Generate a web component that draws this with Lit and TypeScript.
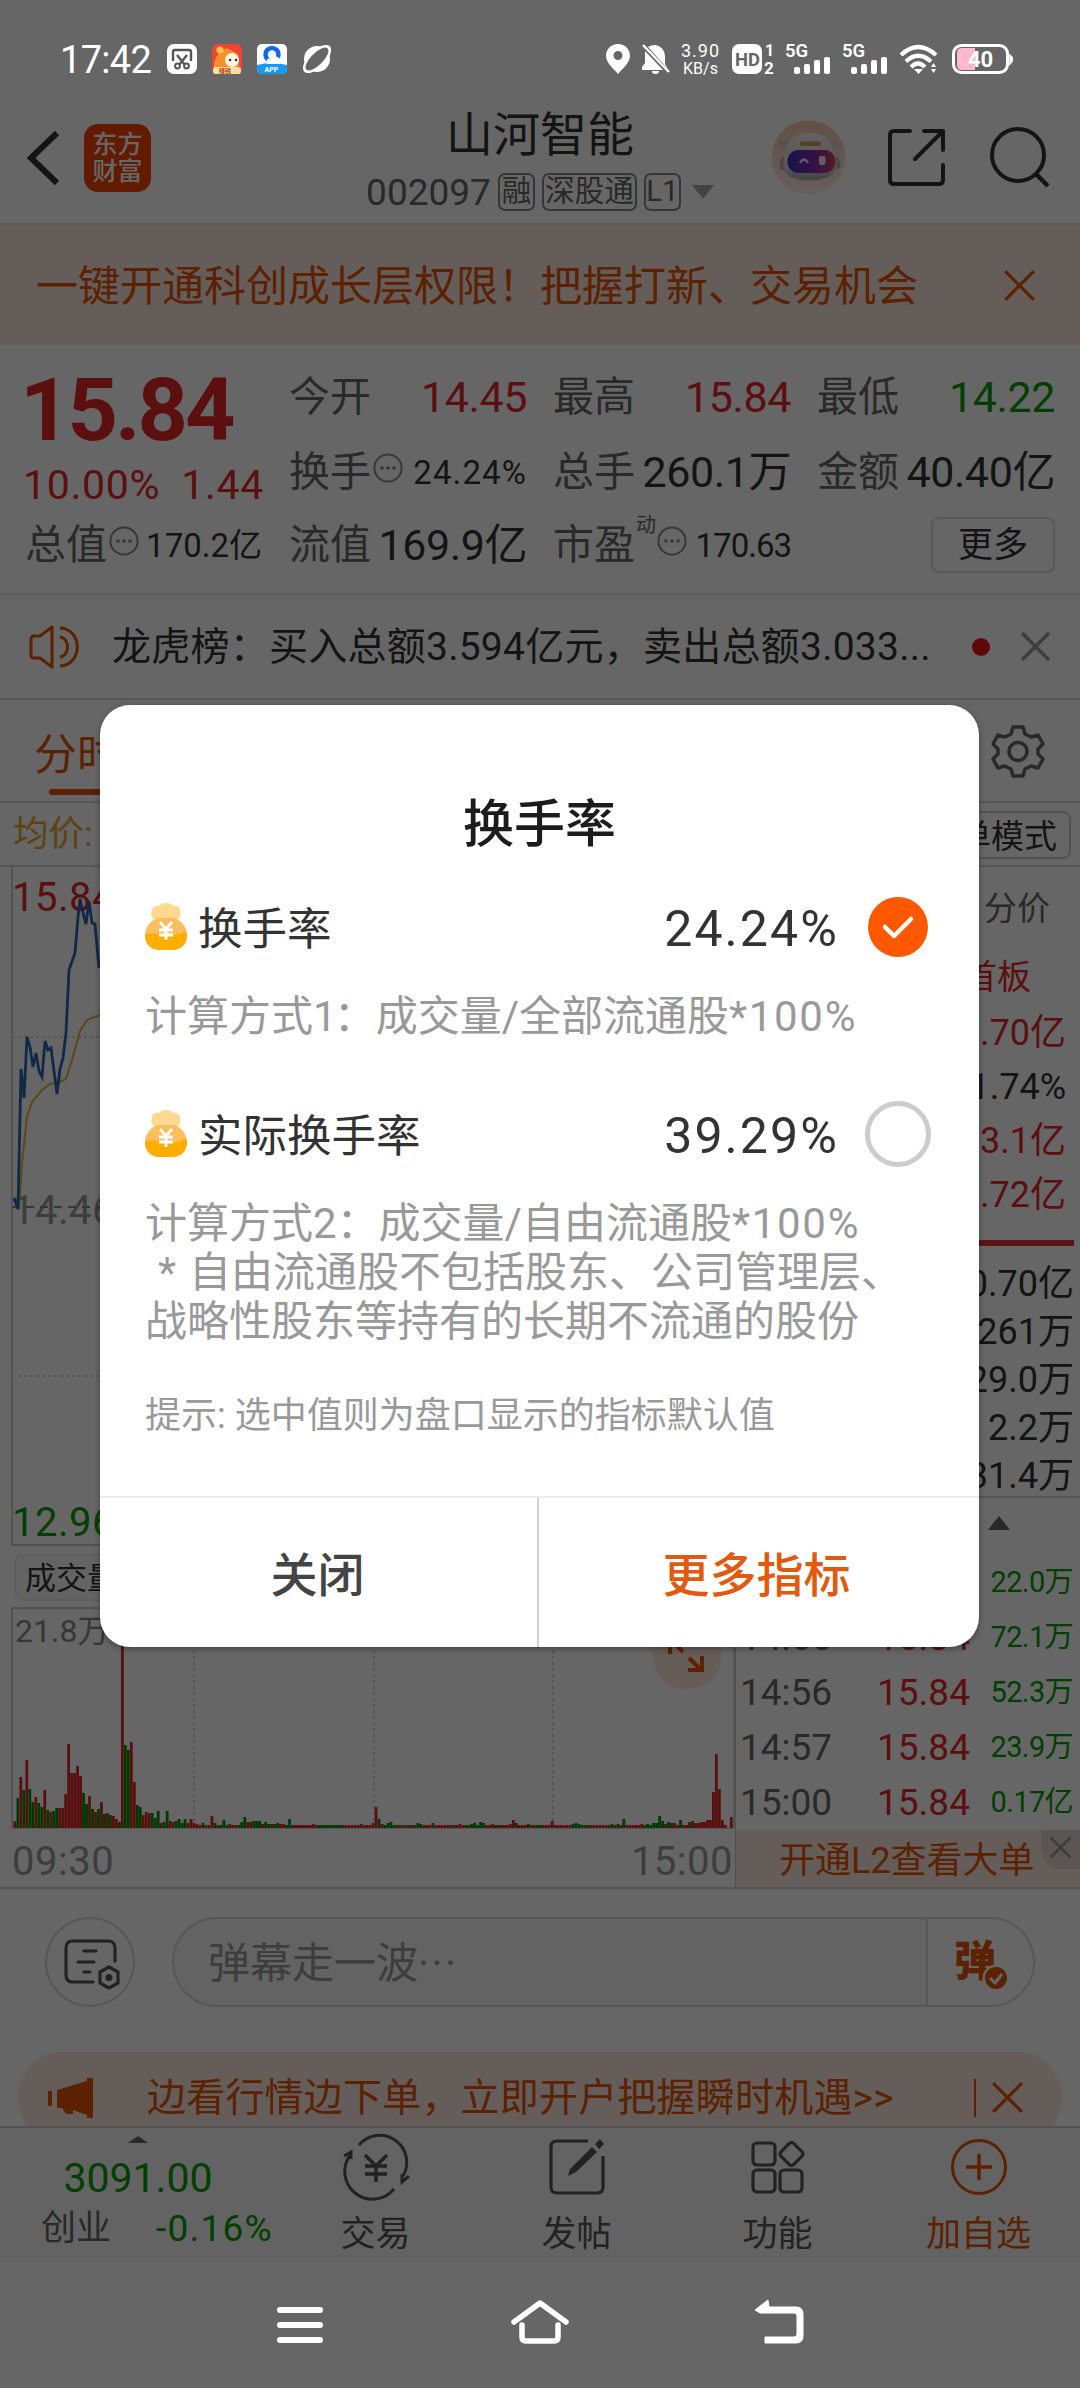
import { LitElement, html, svg, css } from "lit";
import { customElement, state } from "lit/decorators.js";

/* Volume bars: [height, "r" | "g"]; slots without an entry draw a 3px stub. */
const VOLUME_HEAD: [number, string][] = [
  [7, "r"], [30, "g"], [51, "r"], [38, "g"], [68, "r"], [39, "g"], [26, "g"], [31, "r"], [25, "g"], [21, "g"],
  [38, "r"], [18, "g"], [16, "r"], [17, "g"], [20, "g"], [20, "r"], [20, "r"], [34, "r"], [84, "r"], [55, "r"],
  [55, "r"], [62, "r"], [52, "r"], [35, "g"], [24, "g"], [32, "r"], [19, "g"], [16, "r"], [19, "g"], [26, "r"],
  [14, "g"], [15, "r"], [13, "g"], [12, "r"], [9, "r"], [6, "g"], [200, "r"], [83, "g"], [78, "g"], [86, "r"],
  [46, "r"], [23, "g"], [21, "g"], [13, "r"], [16, "r"], [15, "r"], [15, "g"], [10, "g"], [17, "g"], [5, "r"],
  [6, "g"], [17, "g"], [7, "r"], [6, "r"], [7, "g"], [9, "g"], [5, "g"], [9, "g"], [5, "r"], [9, "r"],
  [5, "r"], [4, "r"], [3, "r"], [5, "g"], [3, "r"], [3, "r"], [12, "r"], [5, "g"], [3, "r"], [3, "g"],
  [8, "g"], [3, "g"], [4, "r"], [3, "r"], [3, "r"], [3, "g"], [6, "g"], [11, "g"], [6, "r"], [6, "r"],
  [7, "g"], [7, "g"], [7, "g"], [4, "r"], [6, "g"], [4, "g"], [4, "r"], [4, "g"], [5, "g"], [4, "r"], [4, "r"], [3, "g"], [9, "g"],
];
const VOLUME_TAIL: Record<number, [number, string]> = {
  100: [4, "r"], 116: [4, "r"], 120: [5, "r"], 121: [21, "r"], 122: [9, "g"], 123: [4, "r"], 125: [5, "g"], 126: [6, "g"],
  135: [5, "g"], 136: [4, "g"], 140: [5, "g"], 149: [4, "r"], 153: [4, "g"], 154: [5, "g"], 156: [6, "g"], 157: [5, "g"],
  160: [4, "r"], 166: [4, "r"], 167: [8, "r"], 168: [5, "g"], 172: [4, "g"], 180: [7, "r"], 187: [4, "g"], 188: [5, "g"],
  189: [4, "g"], 200: [4, "g"], 202: [4, "g"], 204: [9, "g"], 210: [4, "r"], 212: [4, "g"], 214: [5, "g"], 215: [5, "g"],
  216: [12, "g"], 217: [7, "g"], 218: [4, "r"], 219: [6, "g"], 220: [5, "g"], 221: [5, "r"], 223: [8, "g"], 226: [6, "r"],
  227: [7, "g"], 228: [5, "r"], 229: [5, "r"], 230: [6, "r"], 231: [6, "r"], 232: [8, "r"], 233: [8, "r"], 234: [36, "r"],
  235: [74, "r"], 236: [39, "r"], 237: [8, "r"], 238: [3, "r"], 239: [0, "r"], 240: [11, "r"],
};
const GREEN_STUBS = [102, 103, 104, 105, 106, 107, 108, 109, 124, 127, 129, 131, 133, 147, 151, 155, 161, 175, 176, 190, 192, 199, 211, 213];

const QUOTES = [
  { name: "今开", value: "14.45", tone: "red" },
  { name: "最高", value: "15.84", tone: "red" },
  { name: "最低", value: "14.22", tone: "green" },
  { name: "换手", value: "24.24%", small: true, more: true },
  { name: "总手", value: "260.1万" },
  { name: "金额", value: "40.40亿" },
];

const TICKS = [
  ["14:54", "15.84", "22.0万"],
  ["14:55", "15.84", "72.1万"],
  ["14:56", "15.84", "52.3万"],
  ["14:57", "15.84", "23.9万"],
  ["15:00", "15.84", "0.17亿"],
];

const cross = (size: number, color: string, w = 3) => html`<svg width=${size} height=${size} viewBox="0 0 30 30">
  <path d="M2 2L28 28M28 2L2 28" fill="none" stroke=${color} stroke-width=${w} /></svg>`;

const dots = html`<svg class="dots" width="30" height="30" viewBox="0 0 30 30">
  <circle cx="15" cy="15" r="13.6" fill="none" stroke="#888" stroke-width="2" />
  <g fill="#888"><circle cx="9" cy="15" r="1.8" /><circle cx="15" cy="15" r="1.8" /><circle cx="21" cy="15" r="1.8" /></g></svg>`;

const bag = html`<svg width="44" height="48" viewBox="0 0 44 48">
  <path d="M8 9C7 4 12 2 15 3C17 -1 27 -1 29 3C33 2 37 5 36 9C38 12 35 16 32 16H12C8 16 6 12 8 9Z" fill="#ffd98f" />
  <path d="M13 15H31C38 18 43 25 43 32C43 42 36 47 28 47H16C8 47 1 42 1 32C1 25 6 18 13 15Z" fill="#ffbe5e" />
  <path d="M1 32C8 29 15 31 22 32S36 31 43 29V32C43 42 36 47 28 47H16C8 47 1 42 1 32Z" fill="#ffae00" />
  <path d="M16 19L22 26L28 19M22 26V37M15 27H29M15 32H29" fill="none" stroke="#fff" stroke-width="2.8" /></svg>`;

@customElement("app-root")
export class AppRoot extends LitElement {
  @state() private selected = 0;

  static styles = css`
    :host { display: block; width: 1080px; height: 2388px; overflow: hidden; position: relative; background: #fff; color: #333;
      font-family: Roboto, "Noto Sans CJK SC", sans-serif; line-height: 1; white-space: nowrap; }
    * { box-sizing: border-box; }
    svg { display: block; flex: none; overflow: visible; }
    svg text { font-family: Roboto, "Noto Sans CJK SC", sans-serif; }
    .red { color: #e52626; }
    .green { color: #009e00; }
    .orange { color: #e65304; }
    .page { display: flex; flex-direction: column; width: 1080px; height: 2388px; padding-top: 94px; }

    .header { display: grid; grid-template-columns: 309px 462px 309px; height: 131px; border-bottom: 2px solid #dedede; }
    .left { display: flex; padding: 30px 0 0 27px; gap: 24px; }
    .back { margin-top: 7px; }
    .logo { width: 67px; height: 68px; border-radius: 14px; background: #f54400; color: #fff; font-size: 25px; font-weight: 500;
      line-height: 27px; text-align: center; padding-top: 7px; }
    .center { display: flex; flex-direction: column; align-items: center; padding-top: 17px; }
    .stock { font-size: 47px; height: 47px; }
    .code { display: flex; align-items: center; gap: 7px; height: 38px; margin-top: 15px; font-size: 37px; color: #666; }
    .tag { display: flex; align-items: center; justify-content: center; width: 37px; height: 38px; border: 2px solid #888; border-radius: 7px; font-size: 29.5px; }
    .tag.wide { width: 95px; }
    .tri { width: 0; height: 0; border: 11px solid transparent; border-top: 14px solid #aaa; border-bottom: 0; margin-left: 4px; }
    .right { display: flex; align-items: flex-start; padding-top: 26px; }
    .share { margin: 9px 0 0 42px; }
    .search { margin: 7px 0 0 44px; }

    .banner { display: flex; align-items: center; justify-content: space-between; height: 120px; padding: 0 44px 0 36px;
      background: #fae9de; font-size: 42px; }
    .banner span { padding-top: 4px; }

    .quote { height: 250px; border-bottom: 2px solid #e6e6e6; padding: 25px 25px 0 25px; display: grid; grid-template-columns: 237px 1fr; column-gap: 27px;
      grid-template-rows: 148px 50px; }
    .price { font-size: 88px; font-weight: 700; letter-spacing: -3px; height: 78px; line-height: 80px; margin-left: -5px; }
    .change { display: flex; justify-content: space-between; font-size: 41px; margin: 17px -2px 0 -2px; letter-spacing: 0.7px; }
    .cells { display: grid; grid-template-columns: repeat(3, 238px); column-gap: 26px; grid-template-rows: 75px 75px; }
    .cell { display: flex; align-items: center; height: 54px; font-size: 41px; }
    .cell .name { color: #666; }
    .cell .value { margin-left: auto; font-size: 43px; letter-spacing: -0.4px; }
    .cell .value.small { font-size: 33px; letter-spacing: 0; }
    .cell .value.rate { letter-spacing: 1.1px; }
    .cell .value.pe { letter-spacing: -1px; }
    .dots { margin: -9px 0 0 2px; }
    .dyn { font-size: 20px; color: #666; align-self: flex-start; margin: -3px 0 0 1px; }
    .cell .dyn + .dots { margin-left: 1px; }
    .more { margin-left: auto; width: 124px; height: 56px; border: 2px solid #dedede; border-radius: 8px; font-size: 35px;
      display: flex; align-items: center; justify-content: center; }

    .news { display: flex; align-items: center; height: 105px; border-bottom: 2px solid #d8d8d8; padding: 0 29px 0 29px; font-size: 39px; }
    .news .text { margin-left: 32px; width: 822px; letter-spacing: 0.25px; padding-top: 2px; }
    .dot { width: 18px; height: 18px; border-radius: 50%; background: #f01414; margin: 0 auto 0 38px; }

    .tabs { display: flex; justify-content: space-between; height: 103px; border-bottom: 2px solid #d8d8d8; padding: 25px 36px 0 34px; }
    .tab { display: flex; flex-direction: column; font-size: 43px; padding-top: 9px; }
    .tab::after { content: ""; width: 54px; height: 6px; border-radius: 3px; background: #e65304; margin: 12px 0 0 15px; }
    .avg { display: flex; justify-content: space-between; align-items: center; height: 64px; border-bottom: 2px solid #d8d8d8; padding: 2px 9px 0 13px;
      font-size: 35.5px; color: #e6a82e; }
    .mode { height: 48px; border: 2px solid #ccc; border-radius: 8px; padding: 2px 12px 0; display: flex; align-items: center; font-size: 33px; color: #333; }

    .board { display: grid; grid-template-columns: 735px 345px; height: 1022px; border-bottom: 2px solid #d0d0d0; }
    .side { display: flex; flex-direction: column; border-left: 1px solid #c8c8c8; }
    .list { display: flex; flex-direction: column; flex: none; align-items: flex-end; font-size: 36px; }
    .list > div { flex: none; display: flex; align-items: center; height: 54px; }
    .list.flow { height: 373px; padding: 1px 14px 0 0; }
    .list.flow > .head { height: 80px; font-size: 33px; color: #666; padding-right: 16px; }
    .list.flow > .theme { height: 58px; padding-right: 35px; font-size: 34px; }
    .list.flow > .turn { color: #333; }
    .rule { height: 6px; background: #e83434; margin: 0 6px 0 0; }
    .list.big { height: 252px; padding: 14px 6px 0 0; border-bottom: 2px solid #d8d8d8; }
    .list.big > div { height: 48px; }
    .up { width: 0; height: 0; border: 11px solid transparent; border-bottom: 14px solid #666; border-top: 0; margin: 18px 0 25px 252px; }
    .tick { display: grid; grid-template-columns: 137px 1fr auto; align-items: center; height: 55px; padding: 0 7px 0 4px; font-size: 37px; color: #666; }
    .tick .green { font-size: 29px; letter-spacing: -0.6px; }
    .l2 { display: flex; justify-content: space-between; align-items: center; flex: 1; background: #fae9de; font-size: 36px; padding-left: 43px; }
    .l2 .text { padding-top: 4px; }
    .l2close { width: 39px; height: 39px; align-self: flex-start; border-radius: 0 0 0 20px; background: #e4d8cf; display: flex; justify-content: center; padding-top: 6px; }

    .comment { display: flex; height: 163px; padding: 28px 45px 0 45px; gap: 37px; }
    .note { width: 90px; height: 90px; border: 2px solid #d8d8d8; border-radius: 50%; padding: 20px 0 0 17px; }
    .input { width: 864px; height: 90px; border: 2px solid #d8d8d8; border-radius: 45px; background: #f8f8f8; display: flex; align-items: center;
      overflow: hidden; padding-left: 34px; font-size: 42px; color: #999; }
    .input .text { padding-top: 4px; }
    .ell { letter-spacing: 2.5px; }
    .bullet { margin-left: auto; width: 107px; height: 90px; border-left: 2px solid #d8d8d8; background: #fff; padding: 23px 0 0 26px; }

    .promo { height: 74px; overflow: hidden; padding: 0 18px; }
    .pill { display: flex; align-items: center; height: 91px; border-radius: 46px; background: #fae9de; padding: 0 38px 0 30px; font-size: 39px; }
    .pill .text { margin-left: 53px; padding-top: 2px; letter-spacing: 0.2px; }
    .bar { width: 2px; height: 38px; background: #e65304; margin: 0 15px 0 auto; }

    .tabbar { display: grid; grid-template-columns: 276px repeat(4, 201px); height: 136px; border-top: 2px solid #d0d0d0; background: #f8f8f8; }
    .index { display: flex; flex-direction: column; align-items: center; font-size: 41px; padding-top: 8px; }
    .index .arrow { width: 0; height: 0; border: 10px solid transparent; border-bottom: 7px solid #666; border-top: 0; margin-bottom: 15px; }
    .index .row { display: flex; gap: 45px; align-items: center; font-size: 35px; margin: 11px 0 0 41px; color: #666; align-self: flex-start; }
    .index .pct { font-size: 37px; letter-spacing: 1.2px; }
    .item { display: flex; flex-direction: column; align-items: center; padding: 10px 2px 0 0; gap: 21px; font-size: 35px; color: #555; }
    .item.orange { color: #e65304; }

    .mask { position: absolute; inset: 0; background: rgba(0, 0, 0, 0.6); display: flex; flex-direction: column; align-items: center; }
    .status { display: flex; align-items: center; width: 1080px; height: 118px; padding: 0 65px 0 60px; color: #fff; font-size: 38px; }
    .status .clock { width: 107px; letter-spacing: -0.7px; padding-top: 2px; }
    .status .apps { display: flex; gap: 15px; margin-right: auto; }
    .dialog { display: flex; flex-direction: column; width: 879px; height: 942px; margin: 587px 1px 0 0; border-radius: 30px; background: #fff;
      box-shadow: 0 2px 6px rgba(0, 0, 0, 0.35); }
    .title { font-size: 51px; font-weight: 500; text-align: center; color: #1c1c1c; height: 155px; padding-top: 94px; }
    .option { display: flex; align-items: center; height: 68px; margin-top: 33px; padding: 0 48px 0 44px; font-size: 44.5px; color: #333; }
    .option .label { margin-left: 10px; padding-top: 6px; }
    .option .amount { margin-left: auto; font-size: 50px; letter-spacing: 2.1px; padding-top: 4px; }
    .radio { width: 66px; height: 66px; border: 5px solid #ccc; border-radius: 50%; margin-left: 26px; }
    .radio.on { width: 60px; height: 60px; border: 0; background: #ff5800; margin: 0 3px 0 29px; padding: 18px 0 0 15px; }
    .desc { font-size: 42px; line-height: 49px; color: #999; padding: 31px 0 0 45px; white-space: pre; }
    .desc.one { height: 106px; }
    .tight { letter-spacing: -3px; }
    .loose { letter-spacing: 1.7px; }
    .spread { word-spacing: 2.5px; }
    .hint { font-size: 36px; color: #999; padding: 52px 0 0 45px; }
    .actions { display: flex; height: 151px; border-top: 2px solid #ececec; margin-top: auto; }
    .actions div { flex: 1; display: flex; align-items: center; justify-content: center; padding: 5px 2px 0 0; font-size: 47px; font-weight: 500; color: #444; }
    .actions div + div { border-left: 2px solid #d0d0d0; color: #e25a10; padding-right: 5px; }
    .nav { display: flex; margin-top: auto; width: 1080px; height: 126px; padding: 36px 276px 0 275px; justify-content: space-between; }
  `;

  private bars() {
    const out = [];
    for (let i = 0; i <= 240; i++) {
      const [h, tone] = VOLUME_HEAD[i] ?? VOLUME_TAIL[i] ?? [3, GREEN_STUBS.includes(i) ? "g" : "r"];
      out.push(svg`<rect x=${13.5 + i * 2.985} y=${961 - h} width="2.8" height=${h} fill=${tone === "r" ? "#dc2626" : "#009000"} />`);
    }
    return out;
  }

  private chart() {
    return html`<svg width="735" height="1020" viewBox="0 0 735 1020">
      <g fill="none" stroke="#ccc" stroke-width="2">
        <path d="M12 0V678H734M12 961V741H734V961" />
        <path d="M12 961H734" stroke-width="1.5" />
        <path d="M12 170H734M12 509H734M194 741V961M374 741V961M553 741V961" stroke-width="1.5" stroke-dasharray="3 3" />
      </g>
      <text x="12" y="357" font-size="40" fill="#999" letter-spacing=".5">14.46</text>
      <path d="M12 340H734" stroke="#888" stroke-width="2" stroke-dasharray="8 6" />
      <text x="12" y="44" font-size="40" fill="#e52626" letter-spacing=".5">15.84</text>
      <path d="M14 331L19 342L22 296L27 250L32 235L42 223L50 217L60 215L66 212L72 193L80 164L87 153L100 148" fill="none" stroke="#eab03c" stroke-width="2" />
      <path d="M14 331L18 342L21 202L24 231L27 170L30 180L33 200L36 186L39 204L42 210L45 174L48 183L51 181L54 204L57 227L60 202L63 191L66 166L69 103L75 86L78 50L80 32L84 50L86 57L89 34L92 56L95 57L99 101" fill="none" stroke="#2c66b4" stroke-width="2.8" />
      <text x="12" y="669" font-size="40" fill="#009e00" letter-spacing=".5">12.96</text>
      <rect x="15" y="688" width="130" height="45" rx="8" fill="#f9f9f9" stroke="#ddd" />
      <text x="25" y="722" font-size="31" fill="#333">成交量</text>
      ${this.bars()}
      <text x="15" y="775" font-size="32" fill="#888">21.8万</text>
      <circle cx="687" cy="788" r="34.5" fill="#ffe9de" />
      <path d="M689 791L701 803M702 789V803H688M683 785L671 773M670 787V773H684" fill="none" stroke="#e65304" stroke-width="4" />
      <text x="12" y="1008" font-size="40" fill="#999" letter-spacing=".5">09:30</text>
      <text x="733" y="1008" font-size="40" fill="#999" letter-spacing=".5" text-anchor="end">15:00</text>
    </svg>`;
  }

  private status() {
    const signal = (x: number) => svg`<text x=${x} y="13" font-size="18.5" font-weight="600" fill="#fff">5G</text>
      <g fill="#fff"><rect x=${x + 9} y="23" width="6" height="7" rx="2" /><rect x=${x + 19} y="20" width="6" height="10" rx="2" />
      <rect x=${x + 29} y="16" width="6" height="14" rx="2" /><rect x=${x + 39} y="13" width="6" height="17" rx="2" /></g>`;
    return html`<div class="status">
      <span class="clock">17:42</span>
      <div class="apps">
        <svg width="30" height="30" viewBox="0 0 30 30"><rect width="30" height="30" rx="7" fill="#fff" />
          <path d="M6 17V8Q6 6 8 6H22Q24 6 24 8V17M10 11L18 21M20 11L12 21" fill="none" stroke="#555" stroke-width="2.4" />
          <circle cx="10.5" cy="22" r="2.4" fill="none" stroke="#555" stroke-width="2" /><circle cx="19.5" cy="22" r="2.4" fill="none" stroke="#555" stroke-width="2" /></svg>
        <svg width="30" height="30" viewBox="0 0 30 30"><rect width="30" height="30" rx="6" fill="#ee4335" /><path d="M2 30V20Q4 8 15 4L26 10L28 30Z" fill="#f7902c" />
          <circle cx="8" cy="6" r="3.6" fill="#ffc54a" /><circle cx="20" cy="16" r="7" fill="#fff3e2" /><circle cx="18" cy="16" r="1.3" fill="#333" /><circle cx="24" cy="16" r="1.3" fill="#333" />
          <rect x="1" y="23" width="28" height="7" rx="3" fill="#ffe0a4" /><text x="7" y="29" font-size="6" font-weight="700" fill="#c63c10">赚钱</text></svg>
        <svg width="30" height="30" viewBox="0 0 30 30"><rect width="30" height="30" rx="5" fill="#fff" /><path d="M0 21Q15 17 30 21V25Q30 30 25 30H5Q0 30 0 25Z" fill="#169af5" />
          <circle cx="15" cy="10.5" r="6.5" fill="none" stroke="#1268ee" stroke-width="4.5" /><path d="M10 20Q8 14 14 14Q16 9 20 13Q25 14 23 20Z" fill="#fff" />
          <text x="7.5" y="28" font-size="7" font-weight="700" fill="#fff">APP</text></svg>
        <svg width="30" height="30" viewBox="0 0 30 30"><circle cx="15" cy="15" r="13" fill="#fff" /><ellipse cx="15" cy="15" rx="18" ry="8.4" transform="rotate(-45 15 15)" fill="#fff" />
          <ellipse cx="15" cy="15" rx="15" ry="6" transform="rotate(-45 15 15)" fill="#666" /></svg>
      </div>
      <svg width="409" height="30" viewBox="0 0 409 30">
        <path fill-rule="evenodd" d="M12 0C19 0 24 5 24 12C24 19 16 25 12 30C8 25 0 19 0 12C0 5 5 0 12 0ZM12 7A4.5 4.5 0 1 0 12 16A4.5 4.5 0 1 0 12 7Z" fill="#fff" />
        <path d="M49 1C56 2 59 7 59 13V20L62 25L42 3Q45 1 49 1ZM39 7L57 26H36V23L39 19ZM46 27H53Q53 30 49.500 30Q46 30 46 27Z" fill="#fff" />
        <path d="M37 1L63 28" stroke="#fff" stroke-width="2.4" />
        <text x="75" y="13" font-size="18" fill="#fff" textLength="38">3.90</text>
        <text x="77" y="30" font-size="16.500" fill="#fff" textLength="35" lengthAdjust="spacingAndGlyphs">KB/s</text>
        <rect x="126" width="30" height="30" rx="7" fill="#fff" />
        <text x="129" y="22" font-size="19" font-weight="700" fill="#666" textLength="25" lengthAdjust="spacingAndGlyphs">HD</text>
        <text x="159" y="12" font-size="16" font-weight="700" fill="#fff">1</text><text x="158" y="30" font-size="17" font-weight="700" fill="#fff">2</text>
        ${signal(179)}${signal(236)}
        <g fill="none" stroke="#fff" stroke-width="4.200"><path d="M295 11Q312 -5 330 11M300 17.500Q312 6 325 17.500M305 23Q312 16 319 23" /></g>
        <path d="M308 25H317L312.500 30ZM325 23L327.500 19L330 23ZM325 25L327.500 29L330 25Z" fill="#fff" />
        <rect x="347.500" y="1.500" width="54" height="27" rx="8" fill="none" stroke="#fff" stroke-width="3" />
        <path d="M356 4H369V26H356Q351 26 351 21V9Q351 4 356 4Z" fill="#ffb9cf" />
        <path d="M404 11Q409 15 404 20Z" fill="#fff" stroke="#fff" stroke-width="1.500" />
        <text x="374.500" y="22.500" font-size="22" font-weight="700" fill="#fff" text-anchor="middle">40</text>
      </svg>
    </div>`;
  }

  private header() {
    return html`<div class="header">
      <div class="left">
        <svg class="back" width="33" height="54" viewBox="0 0 33 54"><path d="M30 2L4 27L30 52" fill="none" stroke="#333" stroke-width="6" /></svg>
        <div class="logo">东方<br />财富</div>
      </div>
      <div class="center">
        <div class="stock">山河智能</div>
        <div class="code">002097<span class="tag">融</span><span class="tag wide">深股通</span><span class="tag">L1</span><i class="tri"></i></div>
      </div>
      <div class="right">
        <svg width="75" height="75" viewBox="0 0 75 75">
          <defs>
            <linearGradient id="halo" x1="0" y1="0" x2="0" y2="1"><stop offset="0" stop-color="#f8c6ac" /><stop offset="0.6" stop-color="#f8ddd2" /><stop offset="1" stop-color="#fdefe9" /></linearGradient>
            <linearGradient id="shell" x1="0" y1="0" x2="0" y2="1"><stop offset="0" stop-color="#f6f2f0" /><stop offset="0.7" stop-color="#dcd9dc" /><stop offset="1" stop-color="#a4a4ac" /></linearGradient>
            <linearGradient id="visor" x1="0" y1="0" x2="1" y2="0"><stop offset="0" stop-color="#3c33b8" /><stop offset="0.5" stop-color="#7a2bb0" /><stop offset="0.85" stop-color="#b03a80" /><stop offset="1" stop-color="#d84a58" /></linearGradient>
          </defs>
          <circle cx="37.500" cy="37.500" r="37" fill="url(#halo)" />
          <path d="M8 17Q9 22 14 22L20 19L15 30Q6 28 8 17ZM66 17Q65 22 61 20L57 18L60 30Q68 26 66 17Z" fill="#d8cecb" />
          <path d="M13 36Q7 41 9 49L16 52ZM65 36Q71 41 69 48L63 50Z" fill="#b4acae" />
          <path d="M39 13C54 13 60 19 63 30C68 42 66 55 55 58Q38 63 22 58C11 54 11 42 15 30C18 19 24 13 39 13Z" fill="url(#shell)" />
          <rect x="29" y="21.500" width="21" height="4.500" rx="2" fill="#d69a5c" />
          <rect x="16.500" y="30" width="48" height="23" rx="11" fill="url(#visor)" />
          <path d="M29 43Q33 36 37 43" fill="none" stroke="#e6e0ff" stroke-width="2.500" /><rect x="48" y="36" width="6.500" height="9" rx="2" fill="#f4eefa" /></svg>
        <svg class="share" width="58" height="58" viewBox="0 0 58 58"><path d="M22 2H6Q2 2 2 6V51Q2 55 6 55H51Q55 55 55 51V36M36 2H55V21M55 2L27 30" fill="none" stroke="#333" stroke-width="4" stroke-linecap="round" stroke-linejoin="round" /></svg>
        <svg class="search" width="60" height="60" viewBox="0 0 60 60"><circle cx="28" cy="28" r="26" fill="none" stroke="#333" stroke-width="4" /><path d="M45 46L58 59" stroke="#333" stroke-width="4.500" /></svg>
      </div>
    </div>`;
  }

  private quote() {
    return html`<div class="quote">
      <div><div class="price red">15.84</div><div class="change red"><span>10.00%</span><span>1.44</span></div></div>
      <div class="cells">${QUOTES.map((q) => html`<div class="cell"><span class="name">${q.name}</span>${q.more ? dots : ""}
        <span class="value ${q.small ? "small rate" : ""} ${q.tone ?? ""}">${q.value}</span></div>`)}</div>
      <div class="cell"><span class="name">总值</span>${dots}<span class="value small">170.2亿</span></div>
      <div class="cells">
        <div class="cell"><span class="name">流值</span><span class="value">169.9亿</span></div>
        <div class="cell"><span class="name">市盈</span><span class="dyn">动</span>${dots}<span class="value small pe">170.63</span></div>
        <div class="cell"><span class="more">更多</span></div>
      </div>
    </div>`;
  }

  private side() {
    return html`<div class="side">
      <div class="list flow red">
        <div class="head">分价</div><div class="theme">首板</div>
        <div>0.70亿</div><div class="turn">1.74%</div><div>3.1亿</div><div>3.72亿</div>
      </div>
      <div class="rule"></div>
      <div class="list big"><div>0.70亿</div><div>261万</div><div>29.0万</div><div>2.2万</div><div>31.4万</div></div>
      <i class="up"></i>
      ${TICKS.map(([t, p, v]) => html`<div class="tick"><span>${t}</span><span class="red">${p}</span><span class="green">${v}</span></div>`)}
      <div class="l2 orange"><span class="text">开通L2查看大单</span><span class="l2close">${cross(23, "#999", 3.5)}</span></div>
    </div>`;
  }

  private footer() {
    return html`<div class="tabbar">
      <div class="index green"><i class="arrow"></i>3091.00<div class="row"><span>创业</span><span class="green pct">-0.16%</span></div></div>
      <div class="item"><svg width="66" height="58" viewBox="0 0 66 58"><g fill="none" stroke="#555" stroke-width="3">
        <path d="M16 7A27 27 0 0 1 60 38M51 51A27 27 0 0 1 8 16M1 18L8 14V21M66 38L59 44V36" /><path d="M22 17L33 28L44 17M33 28V44M22 28H44M22 36H44" stroke-width="3.500" /></g></svg>交易</div>
      <div class="item"><svg width="58" height="58" viewBox="0 0 58 58"><path d="M40 3H9Q3 3 3 9V49Q3 55 9 55H49Q55 55 55 49V18" fill="none" stroke="#555" stroke-width="3.200" />
        <path d="M44 9L49 14L28 34L20 38L22 31ZM47 6L52 1L56 6L51 11Z" fill="#555" /></svg>发帖</div>
      <div class="item"><svg width="58" height="58" viewBox="0 0 58 58"><g fill="none" stroke="#555" stroke-width="3.200"><rect x="4" y="5" width="22" height="22" rx="4" />
        <rect x="4" y="32" width="22" height="22" rx="4" /><rect x="31" y="32" width="22" height="22" rx="4" /><rect x="33.500" y="7" width="18" height="18" rx="3" transform="rotate(45 42.500 16)" /></g></svg>功能</div>
      <div class="item orange"><svg width="58" height="58" viewBox="0 0 58 58"><circle cx="29" cy="29" r="26.500" fill="none" stroke="#e65304" stroke-width="3" />
        <path d="M29 16V42M16 29H42" stroke="#e65304" stroke-width="3.500" /></svg>加自选</div>
    </div>`;
  }

  private option(i: number, label: string, amount: string) {
    const on = this.selected === i;
    return html`<div class="option" @click=${() => (this.selected = i)}>${bag}<span class="label">${label}</span><span class="amount">${amount}</span>
      <span class="radio ${on ? "on" : ""}">${on ? html`<svg width="30" height="24" viewBox="0 0 30 24"><path d="M2 12L11 21L28 4" fill="none" stroke="#fff" stroke-width="4.500" stroke-linecap="round" stroke-linejoin="round" /></svg>` : ""}</span></div>`;
  }

  render() {
    return html`
      <div class="page">
        ${this.header()}
        <div class="banner orange"><span>一键开通科创成长层权限！把握打新、交易机会</span>${cross(33, "#e65304")}</div>
        ${this.quote()}
        <div class="news">
          <svg width="51" height="44" viewBox="0 0 51 44"><path d="M23 2V42L11 33H5Q2 33 2 30V14Q2 11 5 11H11ZM31 3C54 4 54 40 31 41M31 12C41 13 41 31 31 32" fill="none" stroke="#e65304" stroke-width="3" stroke-linejoin="round" /></svg>
          <span class="text">龙虎榜：买入总额3.594亿元，卖出总额3.033...</span><i class="dot"></i>${cross(31, "#999", 3.5)}
        </div>
        <div class="tabs"><div class="tab orange">分时</div>
          <svg width="52" height="52" viewBox="0 0 52 52"><path d="M21 2H31L33 9L39 12L46 10L51 19L46 24V29L51 34L46 43L39 41L33 44L31 51H21L19 44L13 41L6 43L1 34L6 29V24L1 19L6 10L13 12L19 9Z" fill="none" stroke="#666" stroke-width="3.500" stroke-linejoin="round" />
            <circle cx="26" cy="26.500" r="9" fill="none" stroke="#666" stroke-width="3.500" /></svg></div>
        <div class="avg"><span>均价:</span><span class="mode">简单模式</span></div>
        <div class="board">${this.chart()}${this.side()}</div>
        <div class="comment">
          <div class="note"><svg width="58" height="52" viewBox="0 0 58 52"><g fill="none" stroke="#555" stroke-width="3.200" stroke-linecap="round"><path d="M29 43H9Q2 43 2 36V9Q2 2 9 2H44Q51 2 51 9V22M20 12H32M14 23H30M20 33H26" />
            <path d="M45 28L54 33V44L45 49L36 44V33Z" stroke-linejoin="round" /></g><circle cx="45" cy="38.500" r="3.500" fill="#555" /></svg></div>
          <div class="input"><span class="text">弹幕走一波<span class="ell">···</span></span><div class="bullet"><svg width="54" height="50" viewBox="0 0 54 50"><text x="0" y="36" font-size="42" font-weight="900" fill="#e65304">弹</text>
            <circle cx="42" cy="38" r="13.500" fill="#fff" /><circle cx="42" cy="38" r="11" fill="#e65304" /><path d="M36 38L41 43L48 34" fill="none" stroke="#fff" stroke-width="3" /></svg></div></div>
        </div>
        <div class="promo"><div class="pill orange">
          <svg width="46" height="40" viewBox="0 0 46 40"><path d="M0 13H4V28H0ZM9 12L39 3V0H45V40H39V37L25 32V36H18L14 30H9Z" fill="#e65304" /></svg>
          <span class="text">边看行情边下单，立即开户把握瞬时机遇&gt;&gt;</span><i class="bar"></i>${cross(33, "#e65304")}
        </div></div>
        ${this.footer()}
      </div>
      <div class="mask">
        ${this.status()}
        <div class="dialog">
          <div class="title">换手率</div>
          ${this.option(0, "换手率", "24.24%")}
          <div class="desc one">计算方式<span class="tight">1</span>：成交量/全部流通股<span class="loose">*100%</span></div>
          ${this.option(1, "实际换手率", "39.29%")}
          <div class="desc">计算方式2：成交量/自由流通股<span class="loose">*100%</span><br /><span class="spread"> * 自由流通股不包括股东、公司管理层、</span><br />战略性股东等持有的长期不流通的股份</div>
          <div class="hint">提示: 选中值则为盘口显示的指标默认值</div>
          <div class="actions"><div>关闭</div><div>更多指标</div></div>
        </div>
        <div class="nav">
          <svg width="50" height="52" viewBox="0 0 50 52"><path d="M5 12H45M5 27H45M5 42H45" stroke="#fff" stroke-width="6" stroke-linecap="round" /></svg>
          <svg width="60" height="52" viewBox="0 0 60 52"><path d="M4 24L30 5L56 24M12 27V39Q12 43 16 43H44Q48 43 48 39V27" fill="none" stroke="#fff" stroke-width="5.500" stroke-linecap="round" stroke-linejoin="round" /></svg>
          <svg width="50" height="52" viewBox="0 0 50 52"><path d="M14 2L1 12L6 15H40Q43 15 43 18V36Q43 39 40 39H11V45H42Q49 45 49 38V16Q49 9 42 9H15Z" fill="#fff" stroke="#fff" stroke-linejoin="round" /></svg>
        </div>
      </div>`;
  }
}
